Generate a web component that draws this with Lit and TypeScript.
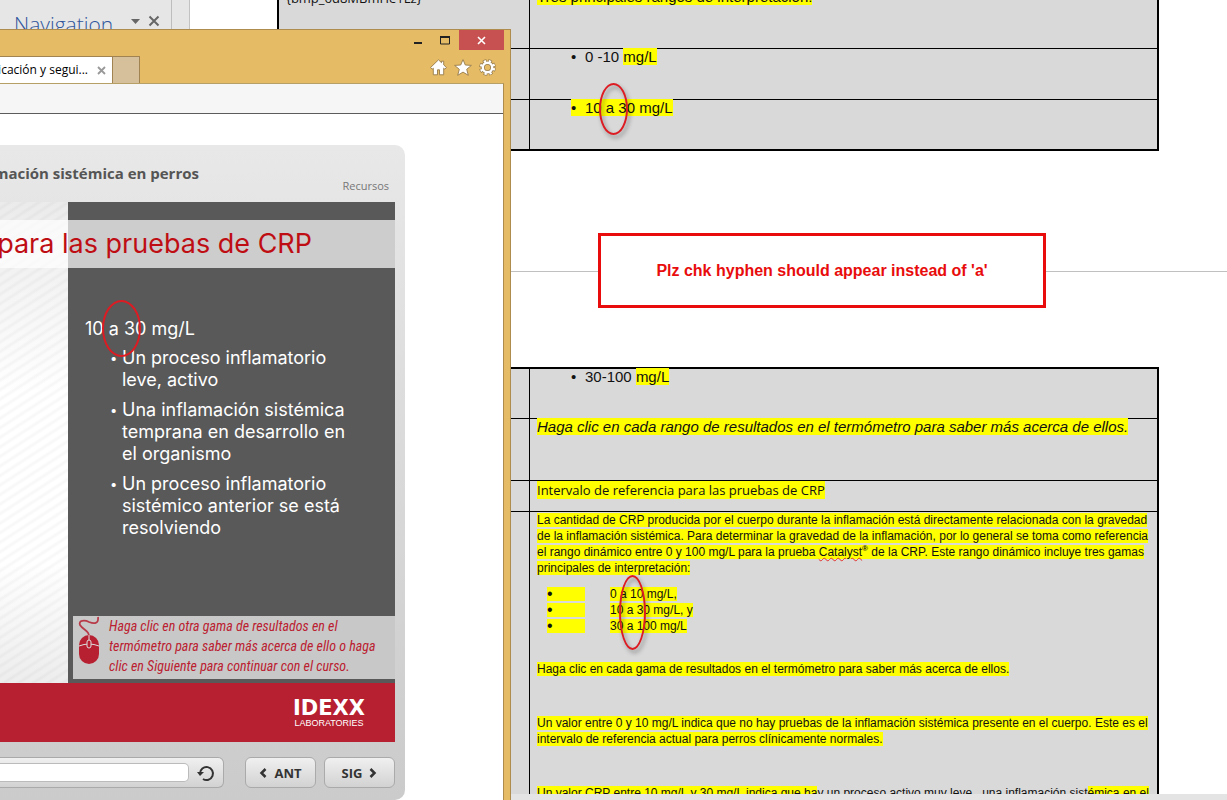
import { LitElement, html, css } from "lit";
import { customElement } from "lit/decorators.js";

@customElement("word-document")
class WordDocument extends LitElement {
  static styles = css`
    :host {
      display: flex;
      flex-direction: column;
      height: 100%;
      overflow: hidden;
      background: #fff;
      font-family: "Liberation Sans", Arial, sans-serif;
      color: #111;
    }
    .main {
      flex: 1;
      min-height: 0;
      display: flex;
      overflow: hidden;
    }
    .nav {
      box-sizing: border-box;
      width: 190px;
      flex: none;
      background: #e6e6e6;
      border-right: 1px solid #c2c2c2;
      display: flex;
    }
    .pane {
      box-sizing: border-box;
      width: 172px;
      height: 100%;
      border-right: 1px solid #bdbdbd;
      padding: 10px 11px 0 14px;
      display: flex;
      align-items: flex-start;
      justify-content: space-between;
    }
    .pane h2 {
      margin: 0;
      font: 300 21px/28px "Open Sans", sans-serif;
      color: #2f559c;
    }
    .tools {
      display: flex;
      gap: 7px;
      padding-top: 5px;
    }
    .tools button {
      border: 0;
      padding: 0;
      background: none;
      display: flex;
    }
    .pages {
      flex: 1;
      min-width: 0;
      margin-top: -16px;
    }
    .page {
      padding: 0 68px 0 87px;
    }
    .first {
      padding-bottom: 120px;
    }
    .second {
      padding-top: 95px;
      border-top: 1px solid #c0c0c0;
    }
    table {
      width: 100%;
      box-sizing: border-box;
      border: 2px solid #000;
      border-spacing: 0;
      table-layout: fixed;
      background: #d9d9d9;
    }
    col.key {
      width: 251px;
    }
    td {
      box-sizing: border-box;
      padding: 0 7px;
      vertical-align: top;
      white-space: nowrap;
      border-bottom: 1px solid #000;
      font-size: 15px;
      line-height: 16px;
    }
    td:first-child {
      border-right: 1px solid #000;
    }
    tr:last-child td {
      border-bottom: 0;
    }
    .h49 td { height: 49px; }
    .h50 td { height: 50px; }
    .h51 td { height: 51px; }
    .h62 td { height: 62px; }
    .h63 td { height: 63px; }
    .h31 td { height: 31px; }
    .tall td { height: 400px; }
    mark {
      background: #ff0;
      color: inherit;
    }
    .id {
      font: 13px/24px "Open Sans", sans-serif;
    }
    .lead {
      line-height: 21px;
    }
    .item {
      margin: 0;
      padding: 0 0 0 34px;
      list-style: none;
    }
    .item .dot {
      display: inline-block;
      width: 14px;
    }
    .ref {
      font: 13px/18px "Open Sans", sans-serif;
    }
    .copy p, .copy ul {
      margin: 0;
      font-size: 12px;
      line-height: 16px;
    }
    .copy ul {
      list-style: none;
      padding: 10px 0 0 10px;
    }
    .copy li {
      display: flex;
      gap: 25px;
      align-items: center;
      height: 16px;
      line-height: 14px;
    }
    .copy li .dot {
      width: 38px;
      font-size: 16px;
    }
    .copy .gap1 { padding-top: 27px; }
    .copy .gap2 { padding-top: 38px; }
    .copy sup {
      font-size: 8px;
      line-height: 0;
      font-weight: bold;
    }
    .typo {
      text-decoration: underline wavy #e03030 1px;
    }
    .status {
      height: 6px;
      flex: none;
      background: #e4e4e4;
    }
  `;
  render() {
    return html`
      <div class="main">
        <aside class="nav">
          <div class="pane">
            <h2>Navigation</h2>
            <div class="tools">
              <button aria-label="Options">
                <svg width="10" height="12"><path d="M0 4h9L4.500 9z" fill="#666" /></svg>
              </button>
              <button aria-label="Close pane">
                <svg width="12" height="12"><path d="M1.500 1.500l9 9M10.500 1.500l-9 9" stroke="#666" stroke-width="2" /></svg>
              </button>
            </div>
          </div>
        </aside>
        <div class="pages">
          <section class="page first">
            <table>
              <colgroup><col class="key" /><col /></colgroup>
              <tr class="h63"><td class="id">{bmp_6d8MBmHe1Lz}</td><td class="lead"><mark>Tres principales rangos de interpretación:</mark></td></tr>
              <tr class="h51"><td></td><td><ul class="item"><li><span class="dot">•</span>0 -10 <mark>mg/L</mark></li></ul></td></tr>
              <tr class="h49"><td></td><td><ul class="item"><li><mark><span class="dot">•</span>10 a 30 mg/L</mark></li></ul></td></tr>
            </table>
          </section>
          <section class="page second">
            <table>
              <colgroup><col class="key" /><col /></colgroup>
              <tr class="h50"><td></td><td><ul class="item"><li><span class="dot">•</span>30-100 <mark>mg/L</mark></li></ul></td></tr>
              <tr class="h62"><td></td><td><em><mark>Haga clic en cada rango de resultados en el termómetro para saber más acerca de ellos.</mark></em></td></tr>
              <tr class="h31"><td></td><td class="ref"><mark>Intervalo de referencia para las pruebas de CRP</mark></td></tr>
              <tr class="tall"><td></td><td class="copy">
                <p><mark>La cantidad de CRP producida por el cuerpo durante la inflamación está directamente relacionada con la gravedad<br />de la inflamación sistémica. Para determinar la gravedad de la inflamación, por lo general se toma como referencia<br />el rango dinámico entre 0 y 100 mg/L para la prueba <span class="typo">Catalyst</span><sup>®</sup> de la CRP. Este rango dinámico incluye tres gamas<br />principales de interpretación:</mark></p>
                <ul>
                  <li><mark class="dot">•</mark><mark>0 a 10 mg/L,</mark></li>
                  <li><mark class="dot">•</mark><mark>10 a 30 mg/L, y</mark></li>
                  <li><mark class="dot">•</mark><mark>30 a 100 mg/L</mark></li>
                </ul>
                <p class="gap1"><mark>Haga clic en cada gama de resultados en el termómetro para saber más acerca de ellos.</mark></p>
                <p class="gap2"><mark>Un valor entre 0 y 10 mg/L indica que no hay pruebas de la inflamación sistémica presente en el cuerpo. Este es el<br />intervalo de referencia actual para perros clínicamente normales.</mark></p>
                <p class="gap2"><mark>Un valor CRP entre 10 mg/L y 30 mg/L indica que ha</mark>y un proceso activo muy leve , una inflamación sist<mark>émica en el</mark></p>
              </td></tr>
            </table>
          </section>
        </div>
      </div>
      <div class="status"></div>
    `;
  }
}

@customElement("course-player")
class CoursePlayer extends LitElement {
  static styles = css`
    :host {
      box-sizing: border-box;
      display: block;
      width: 405px;
      height: 655px;
      padding-right: 10px;
      border-radius: 0 10px 10px 0;
      background: linear-gradient(#e8e8e8, #d9d9d9 50%, #cbcbcb);
      font-family: "Open Sans", sans-serif;
    }
    header {
      height: 57px;
      display: flex;
      justify-content: space-between;
    }
    h1 {
      margin: 0;
      width: 199px;
      display: flex;
      justify-content: flex-end;
      white-space: nowrap;
      font-size: 15px;
      line-height: 20px;
      padding-top: 18px;
      color: #555;
    }
    .resources {
      padding: 33px 6px 0 0;
      font-size: 11px;
      line-height: 16px;
      color: #777;
      text-decoration: none;
    }
    .slide {
      position: relative;
      height: 481px;
      padding-left: 68px;
      background:
        linear-gradient(#00000014, #0000 40%, #0000 75%, #00000012),
        repeating-linear-gradient(147deg, #fff 0 3px, #f8f8f8 5px 6px, #fff 8px);
    }
    .panel {
      box-sizing: border-box;
      height: 100%;
      background: #595959;
      display: flex;
      flex-direction: column;
      padding: 116px 0 4px 5px;
      font: 18px/22px Inter, sans-serif;
      color: #fff;
    }
    .band {
      position: absolute;
      left: 0;
      right: 0;
      top: 18px;
      height: 48px;
      background: #ffffffb3;
    }
    .band h2 {
      margin: 0;
      width: 312px;
      display: flex;
      justify-content: flex-end;
      white-space: nowrap;
      font: 27px/48px Inter, sans-serif;
      color: #bf0d14;
    }
    .range {
      margin: 0 0 7px 12px;
    }
    .panel ul {
      margin: 0;
      padding: 0 0 0 37px;
      list-style: none;
      flex: 1;
    }
    .panel li {
      display: flex;
      margin-bottom: 8px;
    }
    .panel li::before {
      content: "•";
      width: 12px;
      flex: none;
      font-size: 13px;
    }
    .hint {
      display: flex;
      align-items: flex-start;
      gap: 8px;
      height: 63px;
      box-sizing: border-box;
      padding: 0 0 0 5px;
      background: #c8c8c8;
      color: #bb2030;
      font: italic 14px/20px "Roboto Condensed", "Liberation Sans Narrow", sans-serif;
    }
    .hint p {
      margin: 0;
      white-space: nowrap;
    }
    .brand {
      height: 59px;
      background: #b72031;
      color: #fff;
      display: flex;
      align-items: center;
      justify-content: flex-end;
      padding-right: 30px;
      font-family: "DejaVu Sans", sans-serif;
      font-weight: bold;
      text-align: center;
    }
    .name {
      font-size: 21px;
      line-height: 20px;
    }
    .sub {
      font-size: 9px;
      line-height: 10px;
      font-family: "Liberation Sans", sans-serif;
      font-weight: normal;
    }
    .controls {
      display: flex;
      gap: 8px;
      padding-top: 15px;
    }
    .seek, .step {
      box-sizing: border-box;
      height: 31px;
      border: 1px solid #aaa;
      border-radius: 6px;
      background: linear-gradient(#f0f0f0, #d2d2d2);
    }
    .seek {
      flex: 1;
      display: flex;
      align-items: center;
      gap: 8px;
      margin-right: 13px;
      padding-right: 8px;
      border-left: 0;
      border-radius: 0 6px 6px 0;
    }
    .seek input {
      appearance: none;
      box-sizing: border-box;
      flex: 1;
      min-width: 0;
      height: 19px;
      margin: 0;
      background: #fff;
      border: 1px solid #bbb;
      border-left: 0;
      border-radius: 0 5px 5px 0;
    }
    .seek input::-webkit-slider-thumb {
      appearance: none;
      width: 1px;
      height: 1px;
    }
    .seek button {
      border: 0;
      padding: 0;
      background: none;
      display: flex;
    }
    .step {
      width: 71px;
      padding: 0;
      display: flex;
      align-items: center;
      justify-content: center;
      gap: 7px;
      font: bold 13px/18px "Open Sans", sans-serif;
      color: #333;
    }
  `;
  render() {
    return html`
      <header>
        <h1>mación sistémica en perros</h1>
        <a class="resources" href="#">Recursos</a>
      </header>
      <div class="slide">
        <div class="panel">
          <div class="range">10 a 30 mg/L</div>
          <ul>
            <li><span>Un proceso inflamatorio<br />leve, activo</span></li>
            <li><span>Una inflamación sistémica<br />temprana en desarrollo en<br />el organismo</span></li>
            <li><span>Un proceso inflamatorio<br />sistémico anterior se está<br />resolviendo</span></li>
          </ul>
          <div class="hint">
            <svg width="23" height="50" viewBox="0 0 23 50">
              <path d="M11 20C11 14 5 14 2 9C0 4 7 4 11 6C16 8 21 8 20 1" fill="none" stroke="#b83a48" stroke-width="1.800" />
              <rect x="1" y="19" width="20" height="29" rx="10" fill="#b72031" />
              <path d="M1 30Q11 26 21 30M11 19v9" fill="none" stroke="#ddd" stroke-width="1" />
              <rect x="9" y="24" width="4" height="8" rx="2" fill="#b72031" stroke="#ddd" />
            </svg>
            <p>Haga clic en otra gama de resultados en el<br />termómetro para saber más acerca de ello o haga<br />clic en Siguiente para continuar con el curso.</p>
          </div>
        </div>
        <div class="band"><h2>para las pruebas de CRP</h2></div>
      </div>
      <div class="brand">
        <div><div class="name">IDEXX</div><div class="sub">LABORATORIES</div></div>
      </div>
      <div class="controls">
        <div class="seek">
          <input type="range" aria-label="Progreso" />
          <button aria-label="Repetir">
            <svg width="18" height="18" viewBox="0 0 18 18">
              <path d="M3 9.500A6.500 6.500 0 1 1 6 15" fill="none" stroke="#333" stroke-width="2" />
              <path d="M0 8l3 4 4-4z" fill="#333" />
            </svg>
          </button>
        </div>
        <button class="step">
          <svg width="8" height="10"><path d="M6.500 1L2.500 5l4 4" fill="none" stroke="#333" stroke-width="2.500" /></svg>ANT
        </button>
        <button class="step">
          SIG<svg width="8" height="10"><path d="M1.500 1l4 4-4 4" fill="none" stroke="#333" stroke-width="2.500" /></svg>
        </button>
      </div>
    `;
  }
}

@customElement("browser-window")
class BrowserWindow extends LitElement {
  static styles = css`
    :host {
      box-sizing: border-box;
      display: flex;
      flex-direction: column;
      background: #e6bb65;
      border: 1px solid #ad8c4e;
      border-width: 1px 1px 0 0;
      padding-right: 6px;
      overflow: hidden;
      font-family: "Open Sans", sans-serif;
    }
    button {
      border: 0;
      padding: 0;
      background: none;
      display: flex;
      align-items: center;
      justify-content: center;
    }
    .caption {
      flex: none;
      height: 20px;
      display: flex;
      justify-content: flex-end;
    }
    .caption button {
      width: 27px;
      height: 20px;
    }
    .caption .close {
      width: 45px;
      background: #c75050;
    }
    .bar {
      flex: none;
      height: 33px;
      display: flex;
      justify-content: space-between;
      align-items: flex-end;
    }
    .tabs {
      display: flex;
      height: 27px;
    }
    .tab, .new {
      box-sizing: border-box;
      border: 1px solid #a08350;
      border-width: 1px 1px 0 0;
    }
    .tab {
      width: 113px;
      display: flex;
      align-items: center;
      justify-content: flex-end;
      gap: 9px;
      padding-right: 6px;
      background: #fff;
      font-size: 12px;
      line-height: 16px;
      white-space: nowrap;
    }
    .tab span {
      display: flex;
      justify-content: flex-end;
    }
    .new {
      width: 27px;
      background: #d5c09b;
    }
    .icons {
      display: flex;
      gap: 7px;
      padding: 0 8px 7px 0;
    }
    .view {
      flex: 1;
      min-height: 0;
      border-top: 1px solid #b7a066;
      border-right: 1px solid #ad8c4e;
      background: #fff;
      overflow: hidden;
    }
    .tools {
      height: 29px;
      background: #f6f6f6;
      border-bottom: 1px solid #5c5c5c;
      margin-bottom: 31px;
    }
  `;
  render() {
    return html`
      <div class="caption">
        <button aria-label="Minimize"><svg width="9" height="10"><path d="M0 8h8" stroke="#222" stroke-width="2" /></svg></button>
        <button aria-label="Maximize"><svg width="11" height="9"><path d="M.5 1v7h9V1" fill="none" stroke="#222" /><path d="M0 1h10" stroke="#222" stroke-width="2" /></svg></button>
        <button class="close" aria-label="Close"><svg width="9" height="9"><path d="M1 1l7 7M8 1L1 8" stroke="#fff" stroke-width="1.600" /></svg></button>
      </div>
      <div class="bar">
        <div class="tabs">
          <div class="tab"><span>ficación y segui...</span>
            <button aria-label="Close tab"><svg width="9" height="9"><path d="M1 1l7 7M8 1L1 8" stroke="#999" stroke-width="1.800" /></svg></button>
          </div>
          <button class="new" aria-label="New tab"></button>
        </div>
        <div class="icons">
          <button aria-label="Home"><svg width="17" height="17" viewBox="0 0 17 17"><path d="M8.500 .8L.6 8.500l1.600 1.700 1.100-1v6.600h4.200v-5h2v5h4.200V9.200l1.100 1 1.600-1.700-2.700-2.600V2.200h-2.200V3.700z" fill="#fff" stroke="#957b4b" stroke-width=".9" /></svg></button>
          <button aria-label="Favorites"><svg width="18" height="17" viewBox="0 0 18 17"><path d="M9 .6l2.300 5.400 6.100.4-4.700 3.900 1.600 6L9 13.100 3.700 16.300l1.600-6L.6 6.400l6.100-.4z" fill="#fff" stroke="#957b4b" stroke-width=".9" /></svg></button>
          <button aria-label="Tools"><svg width="17" height="17" viewBox="0 0 17 17">
            <g fill="none"><circle cx="8.500" cy="8.500" r="4.700" stroke="#957b4b" stroke-width="4" /><circle cx="8.500" cy="8.500" r="6.500" stroke="#957b4b" stroke-width="3.600" stroke-dasharray="3.400 1.700" />
            <circle cx="8.500" cy="8.500" r="4.700" stroke="#fff" stroke-width="2.400" /><circle cx="8.500" cy="8.500" r="6.500" stroke="#fff" stroke-width="2.400" stroke-dasharray="2.200 2.900" stroke-dashoffset="-.6" /></g>
          </svg></button>
        </div>
      </div>
      <div class="view">
        <div class="tools"></div>
        <course-player></course-player>
      </div>
    `;
  }
}

@customElement("app-root")
class AppRoot extends LitElement {
  static styles = css`
    :host {
      display: block;
      position: relative;
      height: 100vh;
      overflow: hidden;
    }
    browser-window {
      position: absolute;
      left: 0;
      top: 29px;
      bottom: 0;
      width: 511px;
    }
    .note {
      position: absolute;
      left: 598px;
      top: 233px;
      box-sizing: border-box;
      width: 448px;
      height: 75px;
      border: 3px solid #e80c0c;
      background: #fff;
      display: flex;
      align-items: center;
      justify-content: center;
      font: bold 16px/20px "Liberation Sans", Arial, sans-serif;
      color: #e80c0c;
      white-space: nowrap;
    }
    .ring {
      position: absolute;
      box-sizing: border-box;
      border: 2px solid #dd1b22;
      border-radius: 50%;
    }
    .shade {
      filter: drop-shadow(2px 3px 2px #0006);
    }
    .r1 { left: 599px; top: 83px; width: 29px; height: 52px; }
    .r2 { left: 102px; top: 300px; width: 39px; height: 57px; }
    .r3 { left: 619px; top: 575px; width: 27px; height: 75px; }
  `;
  render() {
    return html`
      <word-document></word-document>
      <browser-window></browser-window>
      <div class="note">Plz chk hyphen should appear instead of 'a'</div>
      <div class="ring shade r1"></div>
      <div class="ring r2"></div>
      <div class="ring shade r3"></div>
    `;
  }
}
